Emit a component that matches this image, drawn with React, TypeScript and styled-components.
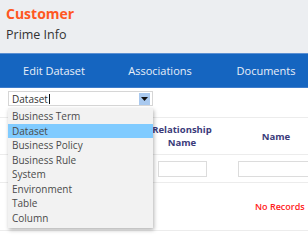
import React from 'react';
import styled, { createGlobalStyle } from 'styled-components';

const GlobalStyle = createGlobalStyle`
  html, body {
    margin: 0;
    padding: 0;
    overflow: hidden;
    background: #ffffff;
    font-family: 'Open Sans', 'Noto Sans', sans-serif;
  }
`;

const Page = styled.div`
  width: 308px;
  height: 241px;
  overflow: hidden;
  position: relative;
`;

const TitleBar = styled.header`
  height: 53px;
  background: #eceef1;
  padding: 5px 6px 0;
  box-sizing: border-box;
`;

const Title = styled.h1`
  margin: 0;
  font-size: 14px;
  line-height: 18px;
  font-weight: 700;
  color: #ff5722;
`;

const SubTitle = styled.div`
  margin-top: 4px;
  font-size: 12.5px;
  line-height: 16px;
  color: #333;
`;

const Nav = styled.nav`
  height: 35px;
  background: #1565c0;
  border-top: 1px solid #5b8fd2;
  border-bottom: 1px solid #3d7ccb;
  box-sizing: border-box;
  display: grid;
  grid-template-columns: 108px 104px 108px;
  align-items: center;
`;

const Tab = styled.div`
  text-align: center;
  color: #e9eff8;
  font-size: 11px;
  white-space: nowrap;
`;

const Toolbar = styled.div`
  padding: 3px 8px 0;
  height: 29px;
  box-sizing: border-box;
  position: relative;
`;

const SelectBox = styled.div`
  width: 145px;
  height: 15px;
  border: 1px solid #d6d6d6;
  box-sizing: border-box;
  display: flex;
  align-items: center;
  padding-left: 3px;
  font-size: 10px;
  color: #333;
  position: relative;
`;

const Caret = styled.span`
  display: inline-block;
  width: 1px;
  height: 10px;
  background: #111;
  margin-left: 1px;
`;

const ArrowButton = styled.span`
  position: absolute;
  right: 2px;
  top: 1px;
  width: 11px;
  height: 12px;
  background: #a9c9ef;
  display: flex;
  align-items: center;
  justify-content: center;
`;

const DropList = styled.ul`
  position: absolute;
  left: 8px;
  top: 20px;
  width: 145px;
  margin: 0;
  padding: 1px 0 3px;
  list-style: none;
  background: #f2f2f2;
  box-shadow: 1px 2px 4px rgba(0, 0, 0, 0.3);
  z-index: 2;
`;

const DropItem = styled.li<{ active?: boolean }>`
  height: 14.5px;
  line-height: 14.5px;
  padding-left: 4px;
  font-size: 10px;
  color: #4a4a4a;
  background: ${(p) => (p.active ? '#80cbff' : 'transparent')};
`;

const Table = styled.div`
  width: 340px;
`;

const Row = styled.div<{ h: number }>`
  display: grid;
  grid-template-columns: 152px 60px 1fr;
  align-items: center;
  height: ${(p) => p.h}px;
  border-top: 1px solid #ececec;
  box-sizing: border-box;
`;

const HeadCell = styled.div`
  text-align: center;
  font-size: 9.5px;
  line-height: 13px;
  font-weight: 700;
  color: #3b3b7a;
`;

const FilterCell = styled.div`
  display: flex;
  justify-content: center;
`;

const FilterInput = styled.div<{ w: number }>`
  width: ${(p) => p.w}px;
  height: 14px;
  border: 1px solid #dcdcdc;
  background: #fff;
`;

const EmptyRow = styled.div`
  height: 49px;
  border-top: 1px solid #ececec;
  border-bottom: 1px solid #ececec;
  box-sizing: border-box;
  padding-left: 255px;
  display: flex;
  align-items: center;
  color: #ff2020;
  font-size: 9px;
  font-weight: 600;
  white-space: nowrap;
`;

const options = [
  'Business Term',
  'Dataset',
  'Business Policy',
  'Business Rule',
  'System',
  'Environment',
  'Table',
  'Column',
];

export default function App() {
  return (
    <Page>
      <GlobalStyle />
      <TitleBar>
        <Title>Customer</Title>
        <SubTitle>Prime Info</SubTitle>
      </TitleBar>
      <Nav>
        <Tab>Edit Dataset</Tab>
        <Tab>Associations</Tab>
        <Tab>Documents</Tab>
      </Nav>
      <Toolbar>
        <SelectBox>
          Dataset<Caret />
          <ArrowButton>
            <svg width="7" height="4" viewBox="0 0 7 4">
              <path d="M0 0h7L3.5 4z" fill="#111" />
            </svg>
          </ArrowButton>
        </SelectBox>
        <DropList>
          {options.map((o) => (
            <DropItem key={o} active={o === 'Dataset'}>
              {o}
            </DropItem>
          ))}
        </DropList>
      </Toolbar>
      <Table>
        <Row h={37}>
          <HeadCell />
          <HeadCell>
            Relationship
            <br />
            Name
          </HeadCell>
          <HeadCell>Name</HeadCell>
        </Row>
        <Row h={28}>
          <FilterCell />
          <FilterCell>
            <FilterInput w={47} />
          </FilterCell>
          <FilterCell>
            <FilterInput w={74} />
          </FilterCell>
        </Row>
        <EmptyRow>No Records</EmptyRow>
      </Table>
    </Page>
  );
}
